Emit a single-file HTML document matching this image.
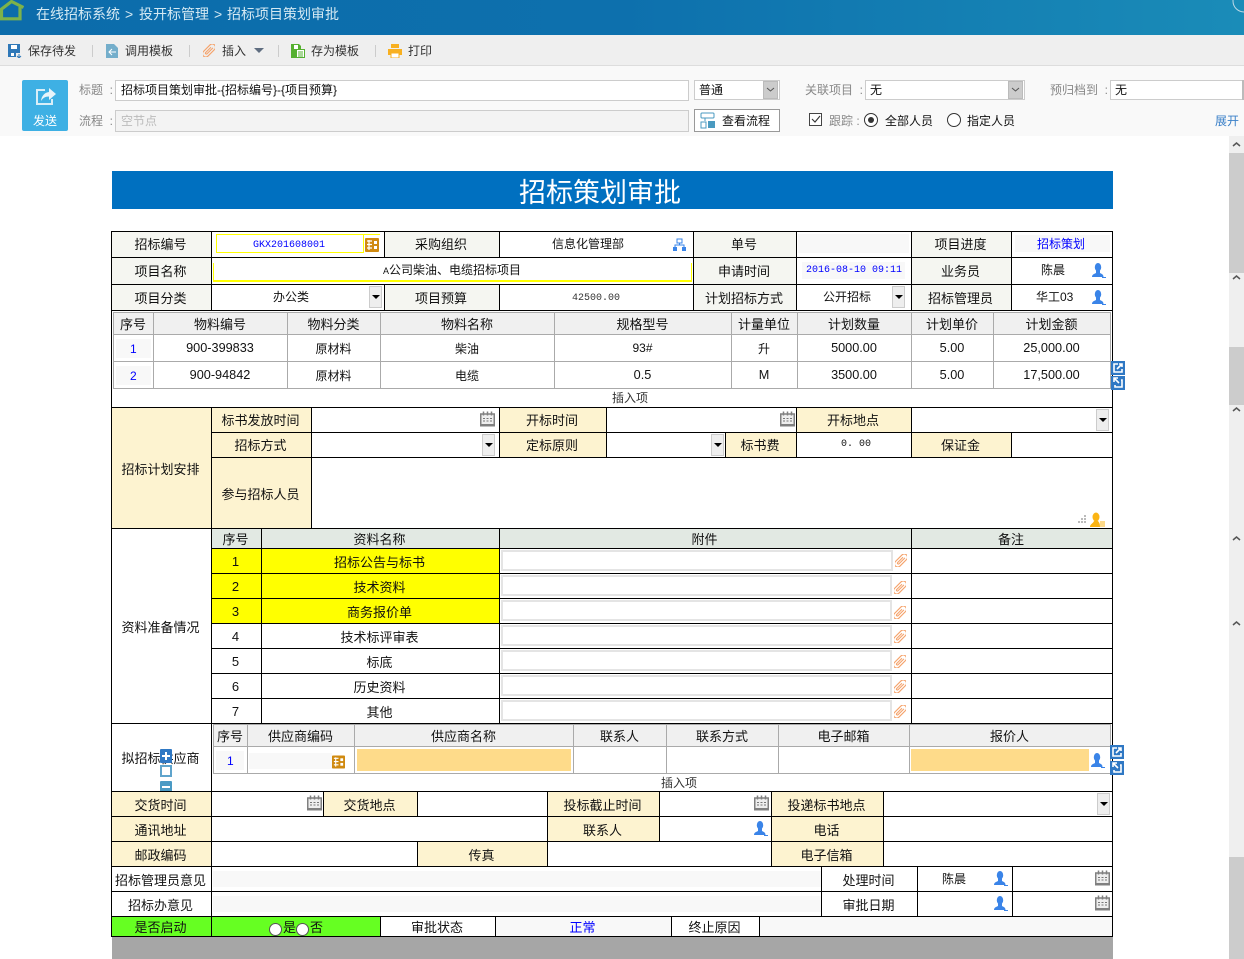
<!DOCTYPE html>
<html lang="zh"><head><meta charset="utf-8"><title>招标策划审批</title>
<style>
html,body{margin:0;padding:0;width:1244px;height:959px;overflow:hidden;background:#fff;font-family:"Liberation Sans","Noto Sans CJK SC",sans-serif;font-size:13px;color:#111}
div,span,svg{position:absolute;box-sizing:border-box}
.c{border:1px solid #000;display:flex;align-items:center;justify-content:center;white-space:nowrap;background:#fff;padding-right:2px}
.u{padding-bottom:2px}
.h{background:#f5f6f1}.y{background:#fdf3d0}.d{background:#e2e9e3}.l{background:#ff0}.g{background:#66ff22}.f{background:#f8f8f8}
.s{border:1px solid #aaa;display:flex;align-items:center;justify-content:center;white-space:nowrap;background:#fff;font-size:12px;padding-right:1px}
.n{font-size:12.7px}
.sh{background:#f0f0f0;font-size:13px}
.t{white-space:nowrap;line-height:16px}
.m{font-family:"Liberation Mono",monospace;font-size:10px}
.b{color:#00f}
.dd{width:13px;height:22px;background:#eee;border:1px solid #ccc}
.dd:after{content:"";position:absolute;left:2px;top:8px;border:4px solid transparent;border-top:4px solid #000;border-bottom:0}
.tb{font-size:12px;color:#333;top:43px}
.lb{font-size:12px;color:#888}
.sep{width:1px;height:12px;top:45px;background:#ccc}
.in{background:#fff;border:1px solid #ccc}
.sel{width:15px;background:#ccc;border:1px solid #bbb}
.at{left:501px;width:392px;height:21px;border:2px solid #e4e4e4;background:#fff}
.bc{top:6px;color:#d4e9f3;font-size:14px}
</style></head><body>
<svg width="0" height="0" style="position:absolute"><defs>
<symbol id="u" viewBox="0 0 14 15"><ellipse cx="6" cy="4.200" rx="3.200" ry="4.200" fill="#3a84e8"/><path d="M0 14c0-2.500 2-3 4-4V7h4v3c2 1 3.500 1.500 3.500 4z" fill="#3a84e8"/><path d="M10 14.500h4" stroke="#3a84e8"/></symbol>
<symbol id="k" viewBox="0 0 15 15"><rect x=".75" y="2.500" width="13.500" height="11.500" fill="#eee" stroke="#808080" stroke-width="1.500"/><path d="M3.500 0v4M7.500 0v4M11.500 0v4" stroke="#808080" stroke-width="1.500"/><path d="M3 7h2M6.500 7h2M10 7h2M3 9.500h2M6.500 9.500h2M10 9.500h2" stroke="#777"/><path d="M0 12.500h15V15H0z" fill="#808080"/></symbol>
<symbol id="p" viewBox="0 0 13 14"><g transform="rotate(45 6.500 7)" fill="none" stroke="#f5a26a" stroke-width="1.200"><rect x="3" y="-1.500" width="7" height="17" rx="3.500"/><path d="M5.500 3v8a1 1 0 0 0 2 0V2"/></g></symbol>
<symbol id="o" viewBox="0 0 14 14"><rect width="14" height="14" rx="1" fill="#d08a10"/><path d="M2 3h5M2 6.500h5M2 10h5M4 2v10" stroke="#fff" stroke-width="1.200"/><rect x="9" y="3" width="3" height="3" fill="#fff"/><rect x="9" y="8" width="3" height="3" fill="#fff"/></symbol>
<symbol id="e1" viewBox="0 0 14 14"><rect width="14" height="14" fill="#2f78c4"/><path d="M7 3H3v8h8V8M6 8l5-5M8 3h3v3" fill="none" stroke="#fff" stroke-width="1.600"/></symbol>
<symbol id="e2" viewBox="0 0 14 14"><rect width="14" height="14" fill="#2f78c4"/><path d="M3 2 8 7M3 6V2h4M10 4h1v7H4V9" fill="none" stroke="#fff" stroke-width="1.600"/></symbol>
</defs></svg>

<!-- header -->
<div style="left:0;top:0;width:1244px;height:35px;background:linear-gradient(90deg,#0c6cab,#0d70ad 50%,#1a8cb8)"></div>
<svg style="left:0;top:0" width="24" height="21" viewBox="0 0 24 21"><path d="M-1 18.800H20V7M-1 11 11.500 1.500 23.500 7.500M1.500 10V19" fill="none" stroke="#7db24a" stroke-width="3.200"/></svg>
<div class="t bc" style="left:36px">在线招标系统</div><div class="t bc" style="left:125px">&gt;</div><div class="t bc" style="left:139px">投开标管理</div><div class="t bc" style="left:214px">&gt;</div><div class="t bc" style="left:227px">招标项目策划审批</div>
<svg style="left:1230px;top:0" width="14" height="16"><circle cx="14" cy="1" r="11" fill="none" stroke="#bcd8e6" stroke-width="1"/></svg>

<!-- toolbar -->
<div style="left:0;top:35px;width:1244px;height:31px;background:#efefef;border-bottom:1px solid #ddd"></div>
<svg style="left:8px;top:44px" width="14" height="14" viewBox="0 0 14 14"><path d="M0 0h12v9H8v4H0z" fill="#2f78b8"/><rect x="3" y="1" width="6" height="4" fill="#fff"/><rect x="3" y="9" width="3" height="3" fill="#fff"/><path d="M11 10v4M9 12l2 2 2-2" stroke="#2f78b8" fill="none"/></svg>
<div class="t tb" style="left:28px">保存待发</div><div class="sep" style="left:92px"></div>
<svg style="left:106px;top:44px" width="13" height="14" viewBox="0 0 13 14"><path d="M0 0h8l4 4v10H0z" fill="#74aecb"/><path d="M3 8h7M6 5 3 8l3 3" stroke="#fff" fill="none"/></svg>
<div class="t tb" style="left:125px">调用模板</div><div class="sep" style="left:189px"></div>
<svg style="left:203px;top:44px" width="12" height="13"><use href="#p"/></svg>
<div class="t tb" style="left:222px">插入</div>
<div style="left:254px;top:48px;border:4px solid transparent;border-top:5px solid #5f6d80;border-left-width:5px;border-right-width:5px;border-bottom:0"></div>
<div class="sep" style="left:278px"></div>
<svg style="left:291px;top:44px" width="14" height="14" viewBox="0 0 14 14"><path d="M0 0h8l2 2v3h4v9H0z" fill="#55b030"/><rect x="3" y="1" width="4" height="4" fill="#fff"/><rect x="6" y="6" width="7" height="7" fill="#fff"/><path d="M7 8h5M7 10h5M7 12h5" stroke="#55b030"/></svg>
<div class="t tb" style="left:311px">存为模板</div><div class="sep" style="left:375px"></div>
<svg style="left:388px;top:44px" width="14" height="14" viewBox="0 0 14 14"><rect x="3" y="0" width="8" height="4" fill="#f8b020"/><rect y="5" width="14" height="6" fill="#f8b020"/><rect x="3" y="9" width="8" height="5" fill="#fff" stroke="#f8b020"/></svg>
<div class="t tb" style="left:408px">打印</div>

<!-- form head -->
<div style="left:0;top:66px;width:1244px;height:70px;background:#f9f9f9"></div>
<div style="left:22px;top:80px;width:46px;height:51px;background:#3eb0e4;border-radius:2px"></div>
<svg style="left:36px;top:87px" width="21" height="19" viewBox="0 0 21 19"><path d="M9 3H1v14h15v-5" fill="none" stroke="#d8eef8" stroke-width="2"/><path d="M13 1l7 6-7 6V9.500C9 9.500 7 11 5 14c.500-5 3.500-8.500 8-9z" fill="#e8f4fa"/></svg>
<div class="t" style="left:33px;top:113px;color:#fff;font-size:12px">发送</div>
<div class="t lb" style="left:79px;top:82px">标题&nbsp;&nbsp;:</div>
<div class="t lb" style="left:79px;top:113px">流程&nbsp;&nbsp;:</div>
<div class="in" style="left:115px;top:80px;width:574px;height:21px"></div>
<div class="t" style="left:121px;top:82px;font-size:12px;color:#111">招标项目策划审批-{招标编号}-{项目预算}</div>
<div style="left:115px;top:110px;width:574px;height:22px;background:#f3f3f3;border:1px solid #ccc"></div>
<div class="t" style="left:121px;top:113px;font-size:12px;color:#bbb">空节点</div>

<div class="in" style="left:694px;top:80px;width:86px;height:20px"></div><div class="sel" style="left:763px;top:81px;height:18px"></div>
<svg style="left:766px;top:87px" width="9" height="6"><path d="M1 1l3.500 3L8 1" stroke="#555" fill="none"/></svg>
<div class="t" style="left:699px;top:82px;font-size:12px">普通</div>
<div class="t lb" style="left:805px;top:82px">关联项目&nbsp;&nbsp;:</div>
<div class="in" style="left:865px;top:80px;width:160px;height:20px"></div><div class="sel" style="left:1008px;top:81px;height:18px"></div>
<svg style="left:1011px;top:87px" width="9" height="6"><path d="M1 1l3.500 3L8 1" stroke="#555" fill="none"/></svg>
<div class="t" style="left:870px;top:82px;font-size:12px">无</div>
<div class="t lb" style="left:1050px;top:82px">预归档到&nbsp;&nbsp;:</div>
<div class="in" style="left:1110px;top:80px;width:134px;height:20px"></div>
<div style="left:1242px;top:80px;width:2px;height:20px;background:#bbb"></div>
<div class="t" style="left:1115px;top:82px;font-size:12px">无</div>

<div style="left:694px;top:109px;width:86px;height:23px;background:#fff;border:1px solid #999"></div>
<svg style="left:700px;top:112px" width="16" height="17" viewBox="0 0 16 17"><rect x="1" y="1" width="13" height="5" rx="1" fill="none" stroke="#4a9ac0"/><path d="M5 6v3" stroke="#4a9ac0"/><rect x="1" y="10" width="5" height="6" fill="none" stroke="#4a9ac0"/><path d="M8 9h7v7H8z" fill="#4a9ac0"/></svg>
<div class="t" style="left:722px;top:113px;font-size:12px">查看流程</div>
<div style="left:809px;top:113px;width:13px;height:13px;border:1px solid #444;background:#fff"></div>
<svg style="left:810px;top:114px" width="11" height="11"><path d="M2 5l3 3 5-6" fill="none" stroke="#333" stroke-width="1.100"/></svg>
<div class="t lb" style="left:829px;top:113px">跟踪&nbsp;:</div>
<div style="left:864px;top:113px;width:14px;height:14px;border:1px solid #333;border-radius:50%;background:#fff"></div>
<div style="left:868px;top:117px;width:6px;height:6px;background:#333;border-radius:50%"></div>
<div class="t" style="left:885px;top:113px;font-size:12px">全部人员</div>
<div style="left:947px;top:113px;width:14px;height:14px;border:1px solid #333;border-radius:50%;background:#fff"></div>
<div class="t" style="left:967px;top:113px;font-size:12px">指定人员</div>
<div class="t" style="left:1215px;top:113px;font-size:12px;color:#3a80c8">展开</div>

<!-- scrollbar -->
<div style="left:1229px;top:136px;width:15px;height:823px;background:#efefef"></div>
<div style="left:1229px;top:153px;width:15px;height:120px;background:#ccc"></div>
<div style="left:1229px;top:347px;width:15px;height:58px;background:#ccc"></div>
<div style="left:1229px;top:857px;width:15px;height:102px;background:#ccc"></div>
<svg style="left:1232px;top:141px" width="9" height="8"><path d="M1 5l3.500-3L8 5" fill="none" stroke="#555" stroke-width="1.500"/></svg>
<svg style="left:1232px;top:274px" width="9" height="8"><path d="M1 5l3.500-3L8 5" fill="none" stroke="#555" stroke-width="1.500"/></svg>
<svg style="left:1232px;top:406px" width="9" height="8"><path d="M1 5l3.500-3L8 5" fill="none" stroke="#555" stroke-width="1.500"/></svg>
<svg style="left:1232px;top:535px" width="9" height="8"><path d="M1 5l3.500-3L8 5" fill="none" stroke="#555" stroke-width="1.500"/></svg>
<svg style="left:1232px;top:620px" width="9" height="8"><path d="M1 5l3.500-3L8 5" fill="none" stroke="#555" stroke-width="1.500"/></svg>

<!-- title -->
<div style="left:112px;top:171px;width:1001px;height:38px;background:#0070c0;color:#fff;font-size:27px;display:flex;align-items:center;justify-content:center;padding-right:25px">招标策划审批</div>

<!-- basic info -->
<div class="c h u" style="left:111px;top:231px;width:101px;height:27px">招标编号</div>
<div class="c" style="left:211px;top:231px;width:174px;height:27px"></div>
<div class="c h u" style="left:384px;top:231px;width:116px;height:27px">采购组织</div>
<div class="c" style="left:499px;top:231px;width:195px;height:27px"><span class="t" style="left:52px;top:4px;font-size:12px">信息化管理部</span></div>
<div class="c h u" style="left:693px;top:231px;width:104px;height:27px">单号</div>
<div class="c" style="left:796px;top:231px;width:116px;height:27px"></div>
<div class="c h u" style="left:911px;top:231px;width:101px;height:27px">项目进度</div>
<div class="c" style="left:1011px;top:231px;width:102px;height:27px"></div>
<div class="c h u" style="left:111px;top:257px;width:101px;height:28px">项目名称</div>
<div class="c" style="left:211px;top:257px;width:483px;height:28px"></div>
<div class="c h u" style="left:693px;top:257px;width:104px;height:28px">申请时间</div>
<div class="c" style="left:796px;top:257px;width:116px;height:28px"></div>
<div class="c h u" style="left:911px;top:257px;width:101px;height:28px">业务员</div>
<div class="c" style="left:1011px;top:257px;width:102px;height:28px"></div>
<div class="c h" style="left:111px;top:284px;width:101px;height:27px">项目分类</div>
<div class="c" style="left:211px;top:284px;width:174px;height:27px"></div>
<div class="c h" style="left:384px;top:284px;width:116px;height:27px">项目预算</div>
<div class="c" style="left:499px;top:284px;width:195px;height:27px"></div>
<div class="c h" style="left:693px;top:284px;width:104px;height:27px">计划招标方式</div>
<div class="c" style="left:796px;top:284px;width:116px;height:27px"></div>
<div class="c h" style="left:911px;top:284px;width:101px;height:27px">招标管理员</div>
<div class="c" style="left:1011px;top:284px;width:102px;height:27px"></div>

<div style="left:216px;top:234px;width:148px;height:19px;border:1px solid #ff0"></div>
<div style="left:364px;top:234px;width:16px;height:1px;background:#ff0"></div>
<div class="t m b" style="left:253px;top:238px">GKX201608001</div>
<svg style="left:365px;top:238px" width="14" height="14"><use href="#o"/></svg>
<svg style="left:673px;top:238px" width="14" height="14" viewBox="0 0 14 14"><rect x="4" y="1" width="5" height="4" fill="none" stroke="#3a84e8"/><path d="M6.500 5v2M2 10V7h9v3" fill="none" stroke="#3a84e8"/><rect x="0" y="9" width="4" height="4" fill="#3a84e8"/><rect x="9" y="9" width="4" height="4" fill="#3a84e8"/></svg>
<div class="f" style="left:798px;top:234px;width:111px;height:19px"></div>
<div class="f" style="left:1015px;top:235px;width:95px;height:17px"></div>
<div class="t b" style="left:1037px;top:236px;font-size:12px">招标策划</div>
<div style="left:213px;top:263px;width:479px;height:19px;border:1px solid #ff0;border-top:0;border-width:0 1px 2px 1px"></div>
<div class="t" style="left:383px;top:262px;font-size:12px"><b style="font-weight:normal;font-size:9px">A</b>公司柴油、电缆招标项目</div>
<div class="f" style="left:802px;top:262px;width:103px;height:17px"></div>
<div class="t m b" style="left:806px;top:263px">2016-08-10 09:11</div>
<div class="t" style="left:1041px;top:262px;font-size:12px">陈晨</div>
<svg style="left:1092px;top:263px" width="14" height="15"><use href="#u"/></svg>
<div class="t" style="left:273px;top:289px;font-size:12px">办公类</div>
<div class="dd" style="left:369px;top:286px"></div>
<div class="t m" style="left:572px;top:291px;color:#333">42500.00</div>
<div class="t" style="left:823px;top:289px;font-size:12px">公开招标</div>
<div class="dd" style="left:892px;top:286px"></div>
<div class="t" style="left:1036px;top:289px;font-size:12px">华工03</div>
<svg style="left:1092px;top:290px" width="14" height="15"><use href="#u"/></svg>

<!-- material table -->
<div class="c" style="left:111px;top:310px;width:1002px;height:98px"></div>
<div class="t" style="left:612px;top:390px;font-size:12px;color:#333">插入项</div>
<div class="s sh" style="left:113px;top:312px;width:41px;height:23px">序号</div>
<div class="s sh" style="left:153px;top:312px;width:135px;height:23px">物料编号</div>
<div class="s sh" style="left:287px;top:312px;width:94px;height:23px">物料分类</div>
<div class="s sh" style="left:380px;top:312px;width:175px;height:23px">物料名称</div>
<div class="s sh" style="left:554px;top:312px;width:178px;height:23px">规格型号</div>
<div class="s sh" style="left:731px;top:312px;width:67px;height:23px">计量单位</div>
<div class="s sh" style="left:797px;top:312px;width:115px;height:23px">计划数量</div>
<div class="s sh" style="left:911px;top:312px;width:83px;height:23px">计划单价</div>
<div class="s sh" style="left:993px;top:312px;width:118px;height:23px">计划金额</div>
<div class="s" style="left:113px;top:334px;width:41px;height:28px"></div>
<div class="f" style="left:116px;top:339px;width:35px;height:19px"></div>
<div class="t b" style="left:130px;top:341px;font-size:12px">1</div>
<div class="s n" style="left:153px;top:334px;width:135px;height:28px">900-399833</div>
<div class="s" style="left:287px;top:334px;width:94px;height:28px">原材料</div>
<div class="s" style="left:380px;top:334px;width:175px;height:28px">柴油</div>
<div class="s" style="left:554px;top:334px;width:178px;height:28px">93#</div>
<div class="s" style="left:731px;top:334px;width:67px;height:28px">升</div>
<div class="s n" style="left:797px;top:334px;width:115px;height:28px">5000.00</div>
<div class="s n" style="left:911px;top:334px;width:83px;height:28px">5.00</div>
<div class="s n" style="left:993px;top:334px;width:118px;height:28px">25,000.00</div>
<div class="s" style="left:113px;top:361px;width:41px;height:28px"></div>
<div class="f" style="left:116px;top:366px;width:35px;height:19px"></div>
<div class="t b" style="left:130px;top:368px;font-size:12px">2</div>
<div class="s n" style="left:153px;top:361px;width:135px;height:28px">900-94842</div>
<div class="s" style="left:287px;top:361px;width:94px;height:28px">原材料</div>
<div class="s" style="left:380px;top:361px;width:175px;height:28px">电缆</div>
<div class="s n" style="left:554px;top:361px;width:178px;height:28px">0.5</div>
<div class="s n" style="left:731px;top:361px;width:67px;height:28px">M</div>
<div class="s n" style="left:797px;top:361px;width:115px;height:28px">3500.00</div>
<div class="s n" style="left:911px;top:361px;width:83px;height:28px">5.00</div>
<div class="s n" style="left:993px;top:361px;width:118px;height:28px">17,500.00</div>
<svg style="left:1111px;top:361px" width="14" height="14"><use href="#e1"/></svg>
<svg style="left:1111px;top:376px" width="14" height="14"><use href="#e2"/></svg>

<!-- plan -->
<div class="c y" style="left:111px;top:407px;width:101px;height:122px">招标计划安排</div>
<div class="c y u" style="left:211px;top:407px;width:101px;height:26px">标书发放时间</div>
<div class="c" style="left:311px;top:407px;width:189px;height:26px"></div>
<div class="c y u" style="left:499px;top:407px;width:108px;height:26px">开标时间</div>
<div class="c" style="left:606px;top:407px;width:191px;height:26px"></div>
<div class="c y u" style="left:796px;top:407px;width:116px;height:26px">开标地点</div>
<div class="c" style="left:911px;top:407px;width:202px;height:26px"></div>
<div class="c y u" style="left:211px;top:432px;width:101px;height:26px">招标方式</div>
<div class="c" style="left:311px;top:432px;width:189px;height:26px"></div>
<div class="c y u" style="left:499px;top:432px;width:108px;height:26px">定标原则</div>
<div class="c" style="left:606px;top:432px;width:120px;height:26px"></div>
<div class="c y u" style="left:725px;top:432px;width:72px;height:26px">标书费</div>
<div class="c" style="left:796px;top:432px;width:116px;height:26px"></div>
<div class="t m" style="left:841px;top:437px">0. 00</div>
<div class="c y u" style="left:911px;top:432px;width:101px;height:26px">保证金</div>
<div class="c" style="left:1011px;top:432px;width:102px;height:26px"></div>
<div class="c y" style="left:211px;top:457px;width:101px;height:72px">参与招标人员</div>
<div class="c" style="left:311px;top:457px;width:802px;height:72px"></div>
<svg style="left:480px;top:411px" width="15" height="16"><use href="#k"/></svg>
<svg style="left:780px;top:411px" width="15" height="16"><use href="#k"/></svg>
<div class="dd" style="left:1096px;top:409px"></div>
<div class="dd" style="left:482px;top:434px"></div>
<div class="dd" style="left:711px;top:434px"></div>
<svg style="left:1078px;top:512px" width="28" height="15" viewBox="0 0 28 15"><path d="M0 9h2v2H0zM3 9h2v2H3zM6 9h2v2H6zM3 6h2v2H3zM6 6h2v2H6zM6 3h2v2H6z" fill="#bbb"/><ellipse cx="18" cy="5" rx="3.500" ry="4.500" fill="#fbb414"/><path d="M12 15c0-3 3-3.500 4-6h4c1 1.500 2 2 2 6z" fill="#fbb414"/><path d="M22 10h5M22 12h5M22 14h5" stroke="#fbb414"/></svg>

<!-- documents -->
<div class="c" style="left:111px;top:528px;width:101px;height:196px">资料准备情况</div>
<div class="c d" style="left:211px;top:528px;width:51px;height:21px">序号</div>
<div class="c d" style="left:261px;top:528px;width:239px;height:21px">资料名称</div>
<div class="c d" style="left:499px;top:528px;width:413px;height:21px">附件</div>
<div class="c d" style="left:911px;top:528px;width:202px;height:21px">备注</div>

<div class="c l" style="left:211px;top:548px;width:51px;height:26px">1</div><div class="c l" style="left:261px;top:548px;width:239px;height:26px">招标公告与标书</div><div class="c" style="left:499px;top:548px;width:413px;height:26px"></div><div class="c" style="left:911px;top:548px;width:202px;height:26px"></div>
<div class="c l" style="left:211px;top:573px;width:51px;height:26px">2</div><div class="c l" style="left:261px;top:573px;width:239px;height:26px">技术资料</div><div class="c" style="left:499px;top:573px;width:413px;height:26px"></div><div class="c" style="left:911px;top:573px;width:202px;height:26px"></div>
<div class="c l" style="left:211px;top:598px;width:51px;height:26px">3</div><div class="c l" style="left:261px;top:598px;width:239px;height:26px">商务报价单</div><div class="c" style="left:499px;top:598px;width:413px;height:26px"></div><div class="c" style="left:911px;top:598px;width:202px;height:26px"></div>
<div class="c" style="left:211px;top:623px;width:51px;height:26px">4</div><div class="c" style="left:261px;top:623px;width:239px;height:26px">技术标评审表</div><div class="c" style="left:499px;top:623px;width:413px;height:26px"></div><div class="c" style="left:911px;top:623px;width:202px;height:26px"></div>
<div class="c" style="left:211px;top:648px;width:51px;height:26px">5</div><div class="c" style="left:261px;top:648px;width:239px;height:26px">标底</div><div class="c" style="left:499px;top:648px;width:413px;height:26px"></div><div class="c" style="left:911px;top:648px;width:202px;height:26px"></div>
<div class="c" style="left:211px;top:673px;width:51px;height:26px">6</div><div class="c" style="left:261px;top:673px;width:239px;height:26px">历史资料</div><div class="c" style="left:499px;top:673px;width:413px;height:26px"></div><div class="c" style="left:911px;top:673px;width:202px;height:26px"></div>
<div class="c" style="left:211px;top:698px;width:51px;height:26px">7</div><div class="c" style="left:261px;top:698px;width:239px;height:26px">其他</div><div class="c" style="left:499px;top:698px;width:413px;height:26px"></div><div class="c" style="left:911px;top:698px;width:202px;height:26px"></div>

<div class="at" style="top:550px"></div><svg style="left:895px;top:554px" width="12" height="13"><use href="#p"/></svg>
<div class="at" style="top:575px;width:391px"></div><svg style="left:894px;top:581px" width="12" height="13"><use href="#p"/></svg>
<div class="at" style="top:600px;width:391px"></div><svg style="left:894px;top:606px" width="12" height="13"><use href="#p"/></svg>
<div class="at" style="top:625px;width:391px"></div><svg style="left:894px;top:630px" width="12" height="13"><use href="#p"/></svg>
<div class="at" style="top:650px;width:391px"></div><svg style="left:894px;top:655px" width="12" height="13"><use href="#p"/></svg>
<div class="at" style="top:675px;width:391px"></div><svg style="left:894px;top:680px" width="12" height="13"><use href="#p"/></svg>
<div class="at" style="top:700px;width:391px"></div><svg style="left:894px;top:705px" width="12" height="13"><use href="#p"/></svg>

<!-- suppliers -->
<div class="c" style="left:111px;top:723px;width:101px;height:69px;align-items:flex-start;padding-top:24px">拟招标供应商</div>
<div class="c" style="left:211px;top:723px;width:902px;height:69px"></div>
<div class="s sh" style="left:213px;top:724px;width:35px;height:23px">序号</div>
<div class="s sh" style="left:247px;top:724px;width:108px;height:23px">供应商编码</div>
<div class="s sh" style="left:354px;top:724px;width:220px;height:23px">供应商名称</div>
<div class="s sh" style="left:573px;top:724px;width:94px;height:23px">联系人</div>
<div class="s sh" style="left:666px;top:724px;width:113px;height:23px">联系方式</div>
<div class="s sh" style="left:778px;top:724px;width:132px;height:23px">电子邮箱</div>
<div class="s sh" style="left:909px;top:724px;width:202px;height:23px">报价人</div>
<div class="s" style="left:213px;top:746px;width:35px;height:28px"></div>
<div class="s" style="left:247px;top:746px;width:108px;height:28px"></div>
<div class="s" style="left:354px;top:746px;width:220px;height:28px"></div>
<div class="s" style="left:573px;top:746px;width:94px;height:28px"></div>
<div class="s" style="left:666px;top:746px;width:113px;height:28px"></div>
<div class="s" style="left:778px;top:746px;width:132px;height:28px"></div>
<div class="s" style="left:909px;top:746px;width:202px;height:28px"></div>
<div class="f" style="left:216px;top:751px;width:28px;height:19px"></div>
<div class="t b" style="left:227px;top:753px;font-size:12px">1</div>
<div class="f" style="left:249px;top:753px;width:83px;height:16px"></div>
<svg style="left:332px;top:755px" width="13" height="14"><use href="#o"/></svg>
<div style="left:357px;top:749px;width:214px;height:22px;background:#fedb8a"></div>
<div style="left:911px;top:749px;width:178px;height:22px;background:#fedb8a"></div>
<svg style="left:1091px;top:753px" width="14" height="15"><use href="#u"/></svg>
<div class="t" style="left:661px;top:775px;font-size:12px;color:#333">插入项</div>
<svg style="left:1110px;top:745px" width="14" height="14"><use href="#e1"/></svg>
<svg style="left:1110px;top:761px" width="14" height="14"><use href="#e2"/></svg>
<svg style="left:160px;top:749px" width="12" height="14" viewBox="0 0 12 14"><rect width="12" height="14" rx="1" fill="#2f78c4"/><path d="M2 7h8M6 3v8" stroke="#fff" stroke-width="2"/></svg>
<div style="left:160px;top:765px;width:12px;height:12px;border:2px solid #5fa4cc;background:#fff"></div>
<svg style="left:160px;top:781px" width="12" height="12" viewBox="0 0 12 12"><rect width="12" height="12" rx="1" fill="#4a9ac4"/><path d="M2 6h8" stroke="#fff" stroke-width="2"/></svg>

<!-- lower rows -->
<div class="c y" style="left:111px;top:791px;width:101px;height:26px">交货时间</div>
<div class="c" style="left:211px;top:791px;width:113px;height:26px"></div>
<div class="c y" style="left:323px;top:791px;width:95px;height:26px">交货地点</div>
<div class="c" style="left:417px;top:791px;width:131px;height:26px"></div>
<div class="c y" style="left:547px;top:791px;width:113px;height:26px">投标截止时间</div>
<div class="c" style="left:659px;top:791px;width:113px;height:26px"></div>
<div class="c y" style="left:771px;top:791px;width:113px;height:26px">投递标书地点</div>
<div class="c" style="left:883px;top:791px;width:230px;height:26px"></div>
<div class="c y" style="left:111px;top:816px;width:101px;height:26px">通讯地址</div>
<div class="c" style="left:211px;top:816px;width:337px;height:26px"></div>
<div class="c y" style="left:547px;top:816px;width:113px;height:26px">联系人</div>
<div class="c" style="left:659px;top:816px;width:113px;height:26px"></div>
<div class="c y" style="left:771px;top:816px;width:113px;height:26px">电话</div>
<div class="c" style="left:883px;top:816px;width:230px;height:26px"></div>
<div class="c y" style="left:111px;top:841px;width:101px;height:26px">邮政编码</div>
<div class="c" style="left:211px;top:841px;width:207px;height:26px"></div>
<div class="c y" style="left:417px;top:841px;width:131px;height:26px">传真</div>
<div class="c" style="left:547px;top:841px;width:225px;height:26px"></div>
<div class="c y" style="left:771px;top:841px;width:113px;height:26px">电子信箱</div>
<div class="c" style="left:883px;top:841px;width:230px;height:26px"></div>
<div class="c" style="left:111px;top:866px;width:101px;height:26px">招标管理员意见</div>
<div class="c" style="left:211px;top:866px;width:611px;height:26px"></div>
<div class="c" style="left:821px;top:866px;width:97px;height:26px">处理时间</div>
<div class="c" style="left:917px;top:866px;width:96px;height:26px"></div>
<div class="c" style="left:1012px;top:866px;width:101px;height:26px"></div>
<div class="c" style="left:111px;top:891px;width:101px;height:26px">招标办意见</div>
<div class="c" style="left:211px;top:891px;width:611px;height:26px"></div>
<div class="c" style="left:821px;top:891px;width:97px;height:26px">审批日期</div>
<div class="c" style="left:917px;top:891px;width:96px;height:26px"></div>
<div class="c" style="left:1012px;top:891px;width:101px;height:26px"></div>
<div class="c g" style="left:111px;top:916px;width:101px;height:21px">是否启动</div>
<div class="c g" style="left:211px;top:916px;width:170px;height:21px"></div>
<div class="c" style="left:380px;top:916px;width:116px;height:21px">审批状态</div>
<div class="c f b" style="left:495px;top:916px;width:177px;height:21px">正常</div>
<div class="c" style="left:671px;top:916px;width:89px;height:21px">终止原因</div>
<div class="c f" style="left:759px;top:916px;width:354px;height:21px"></div>
<div style="left:112px;top:937px;width:1001px;height:22px;background:#a6a6a6"></div>
<div class="f" style="left:213px;top:871px;width:608px;height:16px"></div>
<div class="f" style="left:213px;top:896px;width:608px;height:16px"></div>
<svg style="left:307px;top:795px" width="15" height="16"><use href="#k"/></svg>
<svg style="left:754px;top:795px" width="15" height="16"><use href="#k"/></svg>
<div class="dd" style="left:1097px;top:793px"></div>
<svg style="left:754px;top:821px" width="14" height="15"><use href="#u"/></svg>
<div class="t" style="left:942px;top:871px;font-size:12px">陈晨</div>
<svg style="left:994px;top:871px" width="14" height="15"><use href="#u"/></svg>
<svg style="left:994px;top:896px" width="14" height="15"><use href="#u"/></svg>
<svg style="left:1095px;top:870px" width="15" height="16"><use href="#k"/></svg>
<svg style="left:1095px;top:895px" width="15" height="16"><use href="#k"/></svg>
<div style="left:269px;top:923px;width:13px;height:13px;border:1px solid #555;border-radius:50%;background:#fff"></div>
<div class="t" style="left:283px;top:920px">是</div>
<div style="left:296px;top:923px;width:13px;height:13px;border:1px solid #555;border-radius:50%;background:#fff"></div>
<div class="t" style="left:310px;top:920px">否</div>
</body></html>
